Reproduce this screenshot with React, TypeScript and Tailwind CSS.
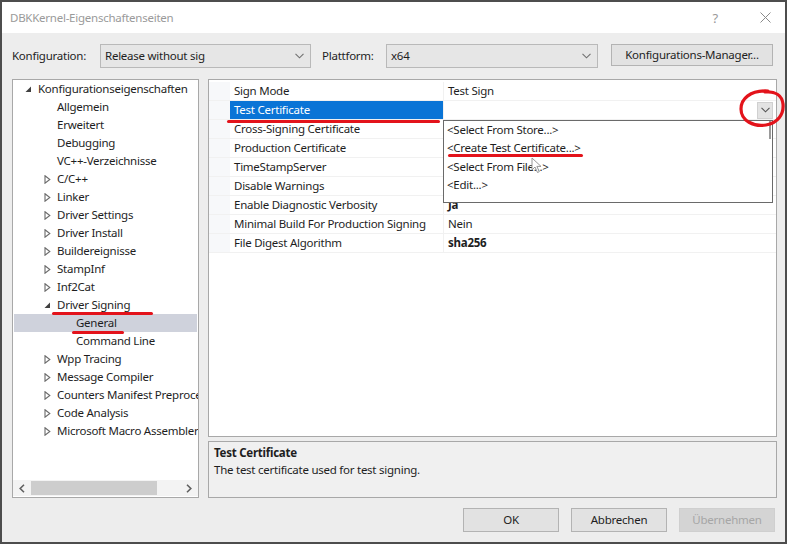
import React from "react";

type Node = { label: string; level: number; exp?: "open" | "closed"; selected?: boolean };

const tree: Node[] = [
  { label: "Konfigurationseigenschaften", level: 0, exp: "open" },
  { label: "Allgemein", level: 1 },
  { label: "Erweitert", level: 1 },
  { label: "Debugging", level: 1 },
  { label: "VC++-Verzeichnisse", level: 1 },
  { label: "C/C++", level: 1, exp: "closed" },
  { label: "Linker", level: 1, exp: "closed" },
  { label: "Driver Settings", level: 1, exp: "closed" },
  { label: "Driver Install", level: 1, exp: "closed" },
  { label: "Buildereignisse", level: 1, exp: "closed" },
  { label: "StampInf", level: 1, exp: "closed" },
  { label: "Inf2Cat", level: 1, exp: "closed" },
  { label: "Driver Signing", level: 1, exp: "open" },
  { label: "General", level: 2, selected: true },
  { label: "Command Line", level: 2 },
  { label: "Wpp Tracing", level: 1, exp: "closed" },
  { label: "Message Compiler", level: 1, exp: "closed" },
  { label: "Counters Manifest Preprocessor", level: 1, exp: "closed" },
  { label: "Code Analysis", level: 1, exp: "closed" },
  { label: "Microsoft Macro Assembler", level: 1, exp: "closed" },
];

const props: { name: string; value: string; bold?: boolean; selected?: boolean }[] = [
  { name: "Sign Mode", value: "Test Sign" },
  { name: "Test Certificate", value: "", selected: true },
  { name: "Cross-Signing Certificate", value: "" },
  { name: "Production Certificate", value: "" },
  { name: "TimeStampServer", value: "" },
  { name: "Disable Warnings", value: "" },
  { name: "Enable Diagnostic Verbosity", value: "Ja", bold: true },
  { name: "Minimal Build For Production Signing", value: "Nein" },
  { name: "File Digest Algorithm", value: "sha256", bold: true },
];

const options = ["<Select From Store...>", "<Create Test Certificate...>", "<Select From File...>", "<Edit...>"];

function Chevron({ color = "#707070" }: { color?: string }) {
  return (
    <svg width="9" height="6" viewBox="0 0 9 6">
      <polyline points="0.5,0.8 4.5,4.8 8.5,0.8" fill="none" stroke={color} strokeWidth="1.1" />
    </svg>
  );
}

function Expander({ exp }: { exp?: "open" | "closed" }) {
  if (exp === "open")
    return (
      <svg width="7" height="7" viewBox="0 0 7 7">
        <polygon points="6,0.5 6,6 0.5,6" fill="#404040" />
      </svg>
    );
  if (exp === "closed")
    return (
      <svg width="7" height="9" viewBox="0 0 7 9">
        <polygon points="1,0.8 5.8,4.5 1,8.2" fill="none" stroke="#6a6a6a" strokeWidth="1.1" />
      </svg>
    );
  return null;
}

function Select({ value, width }: { value: string; width: string }) {
  return (
    <div className={`${width} flex h-[24px] items-center justify-between border border-[#b9b9b9] bg-[#e6e6e6] pl-[4px] pr-[6px]`}>
      <span>{value}</span>
      <Chevron />
    </div>
  );
}

function Button({ children, disabled }: { children: React.ReactNode; disabled?: boolean }) {
  return (
    <div
      className={
        disabled
          ? "flex h-[24px] w-[96px] items-center justify-center border border-[#cfcfcf] bg-[#d4d4d4] text-[#a6a6a6]"
          : "flex h-[24px] w-[96px] items-center justify-center border border-[#b3b3b3] bg-[#e2e2e2]"
      }
    >
      {children}
    </div>
  );
}

export default function App() {
  return (
    <div className="flex h-[544px] w-[787px] flex-col border-2 border-[#4d4d4d] bg-[#ededed] font-['Noto_Sans',sans-serif] text-[11.5px] leading-[18px] tracking-[-0.25px] text-[#1e1e1e]">
      {/* title bar */}
      <div className="flex h-[31px] shrink-0 items-center bg-white pl-[8px] pr-[14px] text-[#9a9a9a]">
        <span>DBKKernel-Eigenschaftenseiten</span>
        <span className="ml-auto mr-[42px] text-[13px]">?</span>
        <svg width="11" height="11" viewBox="0 0 11 11">
          <path d="M0.5 0.5 L10.5 10.5 M10.5 0.5 L0.5 10.5" stroke="#8a8a8a" strokeWidth="1" />
        </svg>
      </div>

      <div className="flex flex-1 flex-col pl-[10px] pr-[8px] pt-[11px]">
        {/* configuration row */}
        <div className="flex h-[24px] items-center">
          <span className="w-[88px]">Konfiguration:</span>
          <Select value="Release without sig" width="w-[211px]" />
          <span className="ml-[11px] w-[64px]">Plattform:</span>
          <Select value="x64" width="w-[212px]" />
          <div className="ml-[13px] flex h-[22px] w-[162px] items-center justify-center self-start border border-[#b3b3b3] bg-[#e2e2e2]">
            Konfigurations-Manager...
          </div>
        </div>

        <div className="mt-[11px] flex h-[419px] gap-[9px]">
          {/* tree */}
          <div className="relative flex w-[187px] flex-col border border-[#a8a8a8] bg-white">
            <div className="overflow-hidden">
              {tree.map((n) => (
                <div
                  key={n.label}
                  className={`flex h-[18px] items-center whitespace-nowrap ${n.selected ? "mx-[1px] bg-[#cfd2dc]" : ""}`}
                  style={{ paddingLeft: (n.selected ? 11 : 12) + n.level * 19 }}
                >
                  <span className="flex w-[13px] shrink-0 items-center">
                    <Expander exp={n.exp} />
                  </span>
                  <span>{n.label}</span>
                </div>
              ))}
            </div>
            <div className="mt-auto mb-[1px] flex h-[16px] items-center bg-[#f3f3f3]">
              <div className="flex w-[18px] justify-center">
                <svg width="6" height="9" viewBox="0 0 6 9">
                  <polyline points="5,0.8 1.2,4.5 5,8.2" fill="none" stroke="#606060" strokeWidth="1.6" />
                </svg>
              </div>
              <div className="h-[14px] w-[126px] bg-[#cdcdcd]" />
              <div className="ml-auto flex w-[18px] justify-center">
                <svg width="6" height="9" viewBox="0 0 6 9">
                  <polyline points="1,0.8 4.8,4.5 1,8.2" fill="none" stroke="#606060" strokeWidth="1.6" />
                </svg>
              </div>
            </div>
            {/* red annotations */}
            <div className="absolute left-[39px] top-[232px] h-[3px] w-[101px] rounded-full bg-[#e3131b]" />
            <div className="absolute left-[59px] top-[251px] h-[3px] w-[52px] rounded-full bg-[#e3131b]" />
          </div>

          {/* right side */}
          <div className="flex w-[569px] flex-col gap-[4px]">
            <div className="relative h-[358px] border border-[#a8a8a8] bg-white pt-[2px]">
              {props.map((p) => (
                <div key={p.name} className="flex h-[19px] whitespace-nowrap border-b border-[#f1f1f1]">
                  <div className="w-[21px] bg-[#f7f8fa]" />
                  <div className={`w-[213px] pl-[4px] ${p.selected ? "bg-[#0a74d6] text-white" : ""}`}>{p.name}</div>
                  <div className="flex flex-1 items-center border-l border-[#f1f1f1] pl-[4px]">
                    <span className={p.bold ? "font-bold" : ""}>{p.value}</span>
                    {p.selected ? (
                      <div className="ml-auto mr-[3px] flex h-[17px] w-[16px] items-center justify-center border border-[#d0d0d0] bg-[#e3e3e3]">
                        <Chevron color="#555" />
                      </div>
                    ) : null}
                  </div>
                </div>
              ))}

              {/* dropdown list */}
              <div className="absolute left-[234px] top-[40px] h-[83px] w-[330px] border border-[#6a6a6a] bg-white pl-[3px]">
                {options.map((o) => (
                  <div key={o} className="h-[18.3px]">
                    {o}
                  </div>
                ))}
                <div className="absolute right-[1px] top-0 h-[18px] w-[2px] bg-[#9a9a9a]" />
              </div>

              {/* mouse cursor */}
              <svg className="absolute left-[322px] top-[77px]" width="12" height="17" viewBox="0 0 12 17">
                <path d="M1 1 L1 13 L4 10 L6.5 15.5 L8.3 14.7 L5.9 9.4 L10 9.4 Z" fill="white" stroke="#8c8c8c" strokeWidth="0.9" />
              </svg>

              {/* red annotations */}
              <div className="absolute left-[18px] top-[40px] h-[3px] w-[213px] rounded-full bg-[#e3131b]" />
              <div className="absolute left-[239px] top-[74px] h-[3px] w-[135px] rounded-full bg-[#e3131b]" />
              <svg className="absolute left-[529px] top-[8px]" width="48" height="42" viewBox="0 0 48 42">
                <path
                  d="M30 3 C12 2 3 11 3 21 C3 33 16 39 28 37 C40 35 46 26 45 16 C44 7 37 3 27 4"
                  fill="none"
                  stroke="#e3131b"
                  strokeWidth="3.2"
                  strokeLinecap="round"
                />
              </svg>
            </div>

            <div className="h-[57px] border border-[#a8a8a8] bg-[#f0f0f0] pl-[5px] pt-[2px] leading-[17px]">
              <div className="font-bold">Test Certificate</div>
              <div>The test certificate used for test signing.</div>
            </div>
          </div>
        </div>

        {/* buttons */}
        <div className="mt-[10px] flex justify-end gap-[12px] pr-[2px]">
          <Button>OK</Button>
          <Button>Abbrechen</Button>
          <Button disabled>Übernehmen</Button>
        </div>
      </div>
    </div>
  );
}
